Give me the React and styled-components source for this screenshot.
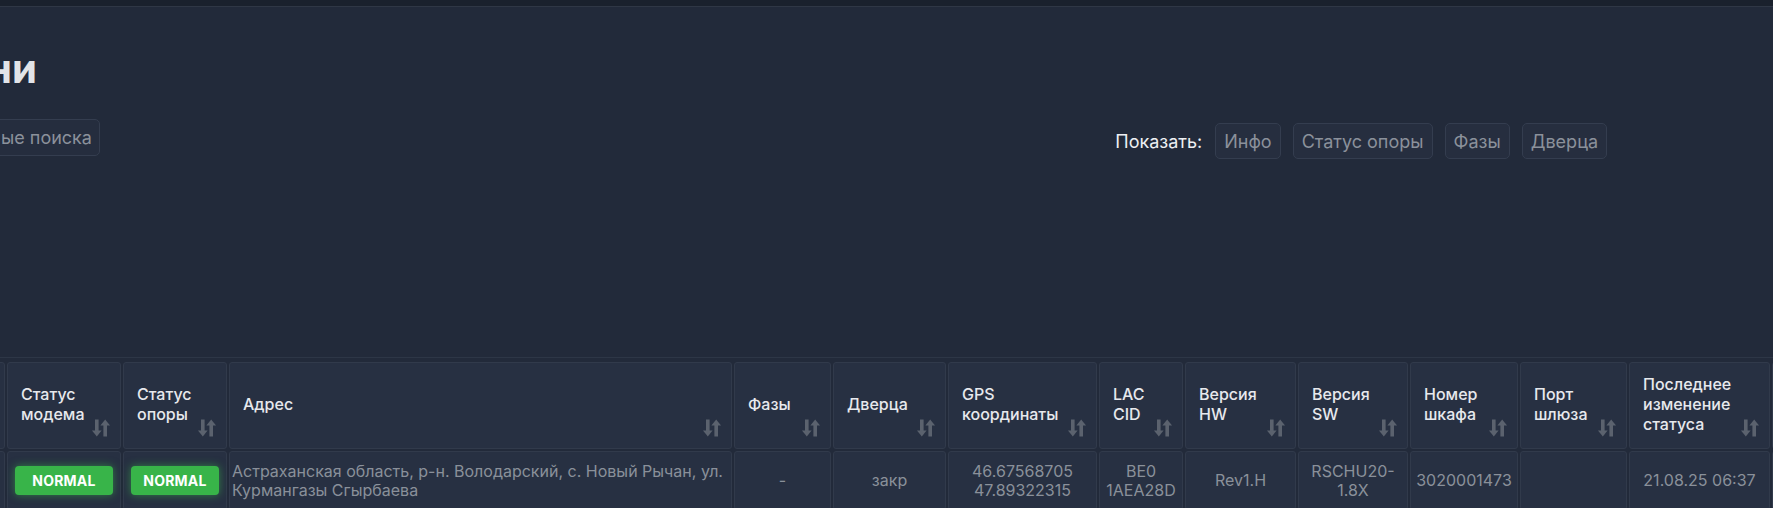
import React from "react";
import styled, { createGlobalStyle } from "styled-components";

const Global = createGlobalStyle`
  html, body {
    margin: 0;
    padding: 0;
    background: #222a3a;
    overflow: hidden;
    font-family: Inter, "Noto Sans", "DejaVu Sans", sans-serif;
  }
  * { box-sizing: border-box; }
`;

const TopBar = styled.div`
  height: 7px;
  background: #1a212d;
  border-bottom: 1px solid #2f3745;
`;

const Main = styled.main`
  display: flex;
  flex-direction: column;
`;

const Title = styled.h1`
  margin: 37px 0 0 -13px;
  font-size: 40px;
  line-height: 50px;
  font-weight: 700;
  color: #e2e4e8;
`;

const Toolbar = styled.div`
  display: flex;
  justify-content: space-between;
  align-items: flex-start;
  margin-top: 25px;
  padding-right: 166px;
`;

const SearchButton = styled.button`
  height: 37px;
  margin-left: -10px;
  padding: 0 7px 0 10px;
  border: 1px solid #343d4f;
  border-radius: 5px;
  background: #252d3e;
  color: #8b919b;
  font-family: inherit;
  font-size: 18px;
`;

const ShowGroup = styled.div`
  display: flex;
  align-items: center;
  gap: 12px;
  margin-top: 4px;
`;

const ShowLabel = styled.span`
  color: #eef0f3;
  font-size: 18px;
  font-weight: 400;
  margin-right: 1px;
`;

const ToggleButton = styled.button`
  height: 36px;
  padding: 0 8px;
  border: 1px solid #343d4f;
  border-radius: 5px;
  background: #262e3f;
  color: #8b919b;
  font-family: inherit;
  font-size: 18px;
`;

const TableWrap = styled.section`
  margin-top: 198px;
  border-top: 1px solid #2d3646;
  padding-top: 4px;
  overflow: hidden;
`;

const Grid = styled.div`
  display: grid;
  width: max-content;
  margin-left: -55px;
  grid-template-columns: 60px 114px 104px 503px 97px 113px 149px 84px 111px 110px 108px 107px 141px 120px;
  grid-template-rows: 87px 59px;
  gap: 2px;
`;

const Cell = styled.div`
  border: 1px solid #313a4b;
  border-radius: 3px;
  background: #273042;
`;

const HeaderCell = styled(Cell)`
  display: flex;
  align-items: center;
  gap: 6px;
  padding: 11px 10px 11px 13px;
  color: #e7e9ed;
  font-size: 16px;
  font-weight: 500;
  line-height: 20px;
`;

const HeaderLabel = styled.span`
  flex: 1;
  margin-top: -3px;
`;

const SortIcon = styled.svg`
  align-self: flex-end;
  flex-shrink: 0;
  width: 18px;
  height: 18px;
  fill: #5b626e;
`;

const BodyCell = styled(Cell)`
  display: flex;
  align-items: center;
  justify-content: ${(p) => (p.$align === "left" ? "flex-start" : "center")};
  text-align: ${(p) => (p.$align === "left" ? "left" : "center")};
  padding: 0 ${(p) => (p.$pad != null ? p.$pad : 3)}px;
  color: #8a909a;
  font-size: 16px;
  line-height: 19px;
`;

const Badge = styled.span`
  display: flex;
  align-items: center;
  justify-content: center;
  width: 100%;
  height: 29px;
  border-radius: 4px;
  background: #38b449;
  box-shadow: 0 0 9px rgba(56, 180, 73, 0.6);
  color: #ffffff;
  font-size: 14px;
  font-weight: 700;
  letter-spacing: 0.2px;
`;

const Sort = () => (
  <SortIcon viewBox="0 0 18 18">
    <rect x="3" y="0.5" width="3.6" height="11.5" />
    <polygon points="0,11.5 9.6,11.5 4.8,17.5" />
    <polygon points="8.4,6.5 18,6.5 13.2,0.5" />
    <rect x="11.4" y="6" width="3.6" height="11.5" />
  </SortIcon>
);

const headers = [
  "",
  "Статус модема",
  "Статус опоры",
  "Адрес",
  "Фазы",
  "Дверца",
  "GPS координаты",
  "LAC CID",
  "Версия HW",
  "Версия SW",
  "Номер шкафа",
  "Порт шлюза",
  "Последнее изменение статуса",
  "",
];

export default function App() {
  return (
    <>
      <Global />
      <TopBar />
      <Main>
        <Title>ни</Title>
        <Toolbar>
          <SearchButton>ые поиска</SearchButton>
          <ShowGroup>
            <ShowLabel>Показать:</ShowLabel>
            <ToggleButton>Инфо</ToggleButton>
            <ToggleButton>Статус опоры</ToggleButton>
            <ToggleButton>Фазы</ToggleButton>
            <ToggleButton>Дверца</ToggleButton>
          </ShowGroup>
        </Toolbar>
        <TableWrap>
          <Grid>
            {headers.map((h, i) => (
              <HeaderCell key={i}>
                <HeaderLabel>{h}</HeaderLabel>
                <Sort />
              </HeaderCell>
            ))}
            <BodyCell></BodyCell>
            <BodyCell $pad={7}>
              <Badge>NORMAL</Badge>
            </BodyCell>
            <BodyCell $pad={7}>
              <Badge>NORMAL</Badge>
            </BodyCell>
            <BodyCell $align="left" $pad={2}>
              Астраханская область, р-н. Володарский, с. Новый Рычан, ул.
              Курмангазы Сгырбаева
            </BodyCell>
            <BodyCell>-</BodyCell>
            <BodyCell>закр</BodyCell>
            <BodyCell>
              46.67568705
              <br />
              47.89322315
            </BodyCell>
            <BodyCell>BE0 1AEA28D</BodyCell>
            <BodyCell>Rev1.H</BodyCell>
            <BodyCell>RSCHU20-1.8X</BodyCell>
            <BodyCell>3020001473</BodyCell>
            <BodyCell></BodyCell>
            <BodyCell>21.08.25 06:37</BodyCell>
            <BodyCell></BodyCell>
          </Grid>
        </TableWrap>
      </Main>
    </>
  );
}
